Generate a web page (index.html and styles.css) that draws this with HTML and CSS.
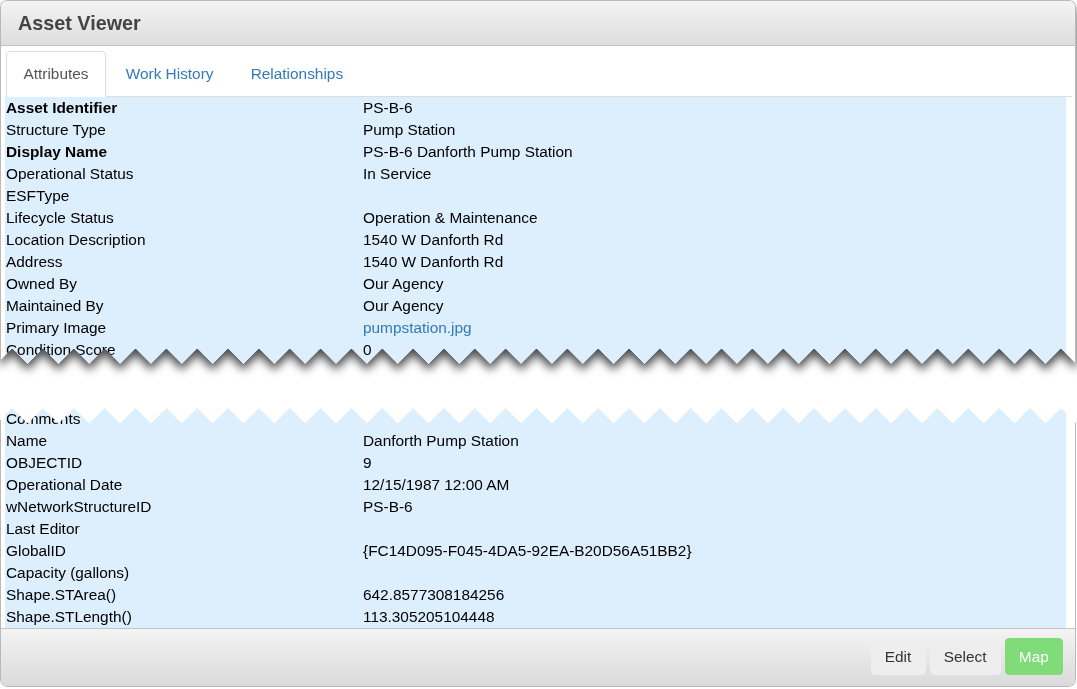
FILE: index.html
```html
<!DOCTYPE html>
<html lang="en">
<head>
    <meta charset="UTF-8">
    <meta name="viewport" content="width=device-width, initial-scale=1.0">
    <title>Asset Viewer</title>
    <link rel="stylesheet" href="styles.css">
</head>
<body>
    <div class="viewer">
        <!-- upper half of the torn screenshot -->
        <div class="tear-shadow">
            <div class="piece piece-top">
                <div class="viewer-head">
                    <h2>Asset Viewer</h2>
                </div>
                <div class="viewer-body">
                    <ul class="tabs">
                        <li class="active"><a href="#">Attributes</a></li>
                        <li><a href="#">Work History</a></li>
                        <li><a href="#">Relationships</a></li>
                    </ul>
                    <table class="attrs">
                        <tr><td class="key bold">Asset Identifier</td><td>PS-B-6</td></tr>
                        <tr><td class="key">Structure Type</td><td>Pump Station</td></tr>
                        <tr><td class="key bold">Display Name</td><td>PS-B-6 Danforth Pump Station</td></tr>
                        <tr><td class="key">Operational Status</td><td>In Service</td></tr>
                        <tr><td class="key">ESFType</td><td></td></tr>
                        <tr><td class="key">Lifecycle Status</td><td>Operation &amp; Maintenance</td></tr>
                        <tr><td class="key">Location Description</td><td>1540 W Danforth Rd</td></tr>
                        <tr><td class="key">Address</td><td>1540 W Danforth Rd</td></tr>
                        <tr><td class="key">Owned By</td><td>Our Agency</td></tr>
                        <tr><td class="key">Maintained By</td><td>Our Agency</td></tr>
                        <tr><td class="key">Primary Image</td><td><a href="#">pumpstation.jpg</a></td></tr>
                        <tr><td class="key">Condition Score</td><td>0</td></tr>
                        <tr><td class="key"></td><td></td></tr>
                    </table>
                </div>
            </div>
        </div>

        <!-- lower half -->
        <div class="piece piece-bottom">
            <div class="viewer-body">
                <table class="attrs">
                    <tr><td class="key">Comments</td><td></td></tr>
                    <tr><td class="key">Name</td><td>Danforth Pump Station</td></tr>
                    <tr><td class="key">OBJECTID</td><td>9</td></tr>
                    <tr><td class="key">Operational Date</td><td>12/15/1987 12:00 AM</td></tr>
                    <tr><td class="key">wNetworkStructureID</td><td>PS-B-6</td></tr>
                    <tr><td class="key">Last Editor</td><td></td></tr>
                    <tr><td class="key">GlobalID</td><td>{FC14D095-F045-4DA5-92EA-B20D56A51BB2}</td></tr>
                    <tr><td class="key">Capacity (gallons)</td><td></td></tr>
                    <tr><td class="key">Shape.STArea()</td><td>642.8577308184256</td></tr>
                    <tr><td class="key">Shape.STLength()</td><td>113.305205104448</td></tr>
                </table>
            </div>
            <div class="viewer-foot">
                <button class="btn">Edit</button>
                <button class="btn">Select</button>
                <button class="btn btn-map">Map</button>
            </div>
        </div>
    </div>
</body>
</html>
```

FILE: styles.css
```css
body {
    margin: 0;
    padding: 0;
    background-color: #fff;
    font-family: "Liberation Sans", Arial, sans-serif;
    font-size: 15.4px;
    color: #000;
}

.viewer {
    width: 1076px;
}

.tear-shadow {
    filter: drop-shadow(0 6px 5px rgba(0, 0, 0, 0.7));
}

.piece {
    background-color: #fff;
    border-left: 1px solid #b9b9b9;
    border-right: 1px solid #b9b9b9;
    overflow: hidden;
}

/* zigzag bottom edge */
.piece-top {
    height: 364px;
    box-sizing: border-box;
    border-top: 1px solid #b9b9b9;
    border-radius: 7px 7px 0 0;
    -webkit-mask: conic-gradient(from -45deg at bottom, #000 90deg, #0000 0) 12.15px 0 / 30.85px 100% repeat-x;
    mask: conic-gradient(from -45deg at bottom, #000 90deg, #0000 0) 12.15px 0 / 30.85px 100% repeat-x;
}

/* zigzag top edge */
.piece-bottom {
    margin-top: 44px;
    border-bottom: 1px solid #b9b9b9;
    border-radius: 0 0 7px 7px;
    -webkit-mask: conic-gradient(from 135deg at top, #000 90deg, #0000 0) -3.275px 0 / 30.85px 100% repeat-x;
    mask: conic-gradient(from 135deg at top, #000 90deg, #0000 0) -3.275px 0 / 30.85px 100% repeat-x;
}

.viewer-head {
    height: 44px;
    display: flex;
    align-items: center;
    padding-left: 17px;
    background: linear-gradient(#f3f3f3, #dddddd);
    border-bottom: 1px solid #c4c4c4;
}

.viewer-head h2 {
    margin: 0;
    font-size: 19.8px;
    font-weight: bold;
    color: #444;
}

.viewer-body {
    padding: 5px 3px 0 4px;
}

.piece-bottom .viewer-body {
    padding-top: 0;
}

.tabs {
    display: flex;
    list-style: none;
    margin: 0;
    padding: 0 0 0 1px;
    border-bottom: 1px solid #ddd;
}

.tabs li {
    margin-right: 2.2px;
    margin-bottom: -1px;
}

.tabs a {
    display: block;
    padding: 11px 16.5px;
    line-height: 22px;
    color: #337ab7;
    text-decoration: none;
    border: 1px solid transparent;
    border-radius: 4.4px 4.4px 0 0;
}

.tabs .active a {
    color: #555;
    background-color: #fff;
    border-color: #ddd #ddd transparent;
}

.attrs {
    width: 1061px;
    border-collapse: collapse;
    background-color: #ddeefd;
}

.attrs td {
    height: 22px;
    padding: 0 1px;
    line-height: 22px;
    vertical-align: middle;
    white-space: nowrap;
}

.attrs .key {
    width: 355px;
}

.attrs .bold {
    font-weight: bold;
}

.attrs a {
    color: #337ab7;
    text-decoration: none;
}

.viewer-foot {
    display: flex;
    justify-content: flex-end;
    gap: 4px;
    padding: 9px 12px 11px 0;
    border-top: 1px solid #c4c4c4;
    background: linear-gradient(#f4f4f4, #dadada);
}

.btn {
    font-family: "Liberation Sans", Arial, sans-serif;
    font-size: 15.4px;
    line-height: 22px;
    padding: 6.6px 13.2px;
    color: #333;
    background-color: #eee;
    border: 1px solid #eee;
    border-radius: 4px;
    cursor: pointer;
}

.btn-map {
    color: #fff;
    background-color: #7fdc78;
    border-color: #7fdc78;
}
```
